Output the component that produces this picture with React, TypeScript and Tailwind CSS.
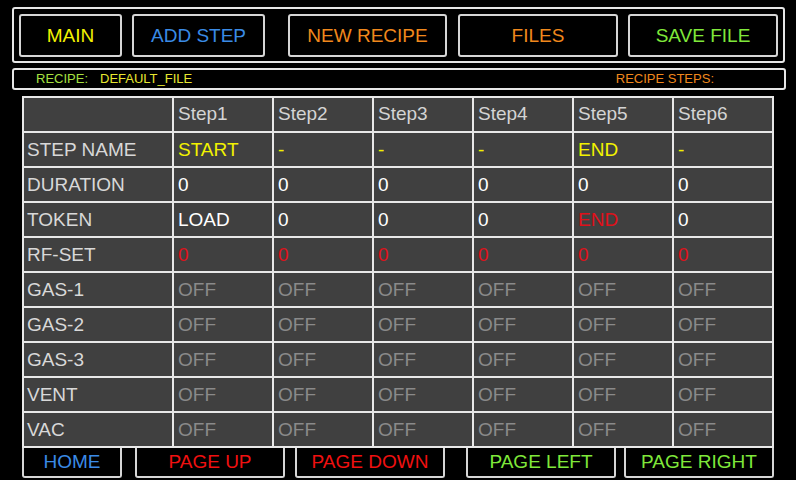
import React from 'react';

const steps = ['Step1', 'Step2', 'Step3', 'Step4', 'Step5', 'Step6'];

type Cell = { text: string; color: string };

const rows: { label: string; cells: Cell[] }[] = [
  {
    label: 'STEP NAME',
    cells: ['START', '-', '-', '-', 'END', '-'].map((t) => ({ text: t, color: 'text-[#f2f200]' })),
  },
  { label: 'DURATION', cells: steps.map(() => ({ text: '0', color: 'text-white' })) },
  {
    label: 'TOKEN',
    cells: [
      { text: 'LOAD', color: 'text-white' },
      { text: '0', color: 'text-white' },
      { text: '0', color: 'text-white' },
      { text: '0', color: 'text-white' },
      { text: 'END', color: 'text-[#e0101a]' },
      { text: '0', color: 'text-white' },
    ],
  },
  { label: 'RF-SET', cells: steps.map(() => ({ text: '0', color: 'text-[#e0101a]' })) },
  { label: 'GAS-1', cells: steps.map(() => ({ text: 'OFF', color: 'text-[#8a8a8a]' })) },
  { label: 'GAS-2', cells: steps.map(() => ({ text: 'OFF', color: 'text-[#8a8a8a]' })) },
  { label: 'GAS-3', cells: steps.map(() => ({ text: 'OFF', color: 'text-[#8a8a8a]' })) },
  { label: 'VENT', cells: steps.map(() => ({ text: 'OFF', color: 'text-[#8a8a8a]' })) },
  { label: 'VAC', cells: steps.map(() => ({ text: 'OFF', color: 'text-[#8a8a8a]' })) },
];

export default function App() {
  return (
    <div className="w-[796px] h-[480px] bg-black overflow-hidden font-['Liberation_Sans',Arial,sans-serif] pt-[7px]">
      {/* Top menu */}
      <div className="ml-[12px] w-[773px] h-[56px] border-2 border-[#e6e6e6] rounded-[3px] flex items-center text-[19px]">
        <button className="ml-[5px] w-[103px] h-[43px] pt-[3px] border-2 border-[#d6d6d6] rounded-[3px] text-[#f2f200]">MAIN</button>
        <button className="ml-[10px] w-[133px] h-[43px] pt-[3px] border-2 border-[#d6d6d6] rounded-[3px] text-[#3a8be6]">ADD STEP</button>
        <button className="ml-[23px] w-[159px] h-[43px] pt-[3px] border-2 border-[#d6d6d6] rounded-[3px] text-[#f0881c]">NEW RECIPE</button>
        <button className="ml-[11px] w-[160px] h-[43px] pt-[3px] border-2 border-[#d6d6d6] rounded-[3px] text-[#f0881c]">FILES</button>
        <button className="ml-[10px] w-[150px] h-[43px] pt-[3px] border-2 border-[#d6d6d6] rounded-[3px] text-[#7fe83a]">SAVE FILE</button>
      </div>

      {/* Recipe bar */}
      <div className="mt-[5px] ml-[12px] w-[774px] h-[22px] border-2 border-[#e6e6e6] rounded-[3px] flex items-center text-[13px]">
        <span className="ml-[22px] text-[#a6e040]">RECIPE:</span>
        <span className="ml-[12px] text-[#e8e830]">DEFAULT_FILE</span>
        <span className="ml-auto mr-[70px] text-[#f0881c]">RECIPE STEPS:</span>
      </div>

      {/* Steps table */}
      <div className="mt-[6px] ml-[22px] w-[752px] bg-[#e8e8e8] p-[2px] grid grid-cols-[148px_98px_98px_98px_98px_98px_98px] auto-rows-[33px] gap-[2px] text-[19px]">
        <div className="bg-[#404040]" />
        {steps.map((s) => (
          <div key={s} className="bg-[#404040] text-[#d4d4d4] flex items-center pl-[4px]">{s}</div>
        ))}
        {rows.map((r) => (
          <React.Fragment key={r.label}>
            <div className="bg-[#404040] text-[#d8d8d8] flex items-center pl-[3px] pt-[1px]">{r.label}</div>
            {r.cells.map((c, i) => (
              <div key={i} className={`bg-[#404040] flex items-center pl-[4px] pt-[1px] ${c.color}`}>{c.text}</div>
            ))}
          </React.Fragment>
        ))}
      </div>

      {/* Bottom navigation */}
      <div className="ml-[22px] flex h-[30px] text-[19px]">
        <button className="w-[100px] h-full border-2 border-t-0 border-[#d6d6d6] rounded-b-[3px] text-[#3a8be6]">HOME</button>
        <button className="ml-[13px] w-[150px] h-full border-2 border-t-0 border-[#d6d6d6] rounded-b-[3px] text-[#f01010]">PAGE UP</button>
        <button className="ml-[10px] w-[150px] h-full border-2 border-t-0 border-[#d6d6d6] rounded-b-[3px] text-[#f01010]">PAGE DOWN</button>
        <button className="ml-[21px] w-[150px] h-full border-2 border-t-0 border-[#d6d6d6] rounded-b-[3px] text-[#7fe83a]">PAGE LEFT</button>
        <button className="ml-[8px] w-[150px] h-full border-2 border-t-0 border-[#d6d6d6] rounded-b-[3px] text-[#7fe83a]">PAGE RIGHT</button>
      </div>
    </div>
  );
}
